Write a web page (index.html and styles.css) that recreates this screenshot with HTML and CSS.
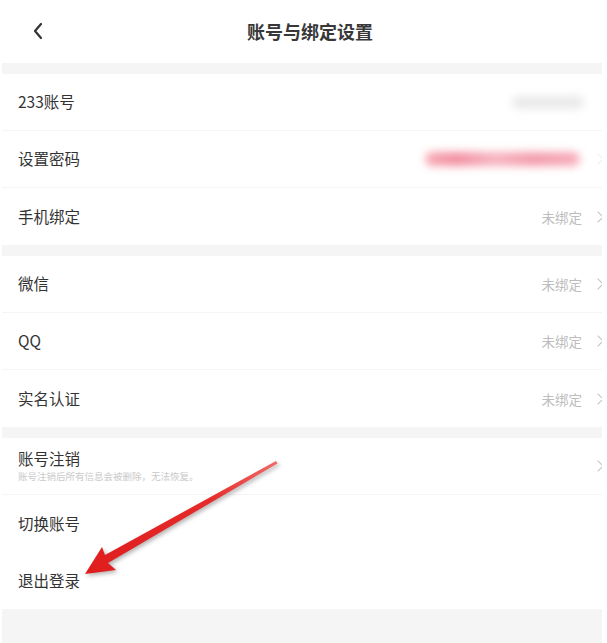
FILE: index.html
```html
<!DOCTYPE html>
<html lang="zh-CN">
<head>
    <meta charset="UTF-8">
    <title>账号与绑定设置</title>
    <link rel="stylesheet" href="styles.css">
</head>
<body>

    <div class="page">

        <!-- Top bar -->
        <div class="top-bar">
            <span class="back">
                <svg width="12" height="18" viewBox="0 0 12 18">
                    <path d="M9 2 L3 9 L9 16" fill="none" stroke="#333" stroke-width="2.2" stroke-linecap="round" stroke-linejoin="round"/>
                </svg>
            </span>
            <h1>账号与绑定设置</h1>
        </div>

        <!-- Account -->
        <div class="group">
            <div class="row">
                <span class="label">233账号</span>
                <span class="hidden-value grey"></span>
            </div>
            <div class="row">
                <span class="label">设置密码</span>
                <span class="hidden-value pink"></span>
                <span class="chevron faint"></span>
            </div>
            <div class="row">
                <span class="label">手机绑定</span>
                <span class="status">未绑定</span>
                <span class="chevron"></span>
            </div>
        </div>

        <!-- Third party -->
        <div class="group">
            <div class="row">
                <span class="label">微信</span>
                <span class="status">未绑定</span>
                <span class="chevron"></span>
            </div>
            <div class="row">
                <span class="label">QQ</span>
                <span class="status">未绑定</span>
                <span class="chevron"></span>
            </div>
            <div class="row">
                <span class="label">实名认证</span>
                <span class="status">未绑定</span>
                <span class="chevron"></span>
            </div>
        </div>

        <!-- Other -->
        <div class="group">
            <div class="row">
                <div class="label-block">
                    <span class="label">账号注销</span>
                    <span class="hint">账号注销后所有信息会被删除，无法恢复。</span>
                </div>
                <span class="chevron"></span>
            </div>
            <div class="row plain">
                <span class="label">切换账号</span>
            </div>
            <div class="row plain">
                <span class="label">退出登录</span>
            </div>
        </div>

        <div class="footer"></div>

        <!-- red pointer arrow -->
        <svg class="pointer" width="607" height="643" viewBox="0 0 607 643">
            <defs>
                <linearGradient id="arrowFill" x1="276" y1="461" x2="85" y2="573" gradientUnits="userSpaceOnUse">
                    <stop offset="0" stop-color="#f06a6a"/>
                    <stop offset="0.35" stop-color="#e52b2b"/>
                    <stop offset="1" stop-color="#e01d1d"/>
                </linearGradient>
            </defs>
            <polygon points="85,574 102,547 105,555 276,461 277.5,463.5 108,563 116,570" fill="url(#arrowFill)"/>
        </svg>
    </div>

</body>
</html>
```

FILE: styles.css
```css
body {
    margin: 0;
    background-color: #fff;
    font-family: "Noto Sans CJK SC", "Noto Sans", sans-serif;
    color: #333;
}
.page {
    width: 600px;
    height: 643px;
    margin-left: 2px;
    display: flex;
    flex-direction: column;
    position: relative;
    overflow: hidden;
}
.top-bar {
    height: 63px;
    display: flex;
    align-items: center;
    justify-content: center;
    position: relative;
    background-color: #fff;
}
.top-bar h1 {
    margin: 0 0 2px 16px;
    font-size: 18px;
    font-weight: bold;
    color: #383838;
}
.back {
    position: absolute;
    left: 30px;
    top: 21px;
}
.group {
    border-top: 11px solid #f5f5f5;
    background-color: #fff;
}
.row {
    height: 57px;
    display: flex;
    align-items: center;
    padding: 0 0 0 16px;
    border-bottom: 1px solid #f5f5f5;
    box-sizing: border-box;
}
.row:last-child, .row.plain {
    border-bottom: none;
}
.label {
    font-size: 15.5px;
    color: #333;
    flex: 1;
    margin-top: -2px;
}
.label-block {
    flex: 1;
    display: flex;
    flex-direction: column;
    padding-top: 2px;
}
.label-block .label {
    flex: none;
    line-height: 20px;
    margin-top: -4px;
}
.hint {
    font-size: 9.5px;
    color: #cacaca;
    margin-top: 1px;
}
.status {
    font-size: 13.5px;
    color: #bdbdbd;
    margin-right: 12px;
}
.chevron {
    width: 7px;
    height: 7px;
    border-top: 1.3px solid #c2c2c2;
    border-right: 1.3px solid #c2c2c2;
    transform: rotate(45deg);
    margin-right: 0;
}
.chevron.faint {
    border-color: #eee;
}
.hidden-value {
    height: 13px;
    border-radius: 7px;
    filter: blur(4px);
}
.hidden-value.grey {
    width: 72px;
    background-color: #e9e9e9;
    margin-right: 18px;
}
.hidden-value.pink {
    width: 155px;
    height: 14px;
    background: linear-gradient(90deg, #f7a9b4, #f28d9e 20%, #f6b3bf 45%, #f39aaa 70%, #f7acb9);
    margin-right: 14px;
}
.footer {
    flex: 1;
    background-color: #f5f5f5;
}
.pointer {
    position: absolute;
    left: -2px;
    top: 0;
    pointer-events: none;
    filter: drop-shadow(2px 2px 2px rgba(0, 0, 0, 0.3));
}
```
